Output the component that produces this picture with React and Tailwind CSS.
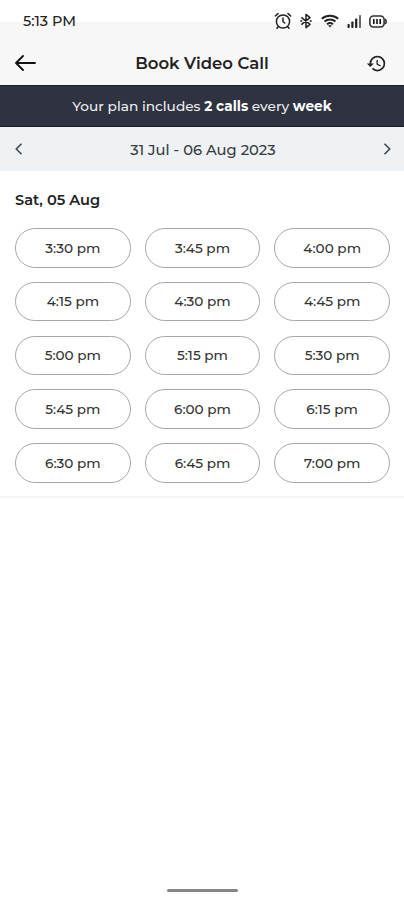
import { useState } from "react";
import { MdHistory } from "react-icons/md";

const slots = [
  "3:30 pm", "3:45 pm", "4:00 pm",
  "4:15 pm", "4:30 pm", "4:45 pm",
  "5:00 pm", "5:15 pm", "5:30 pm",
  "5:45 pm", "6:00 pm", "6:15 pm",
  "6:30 pm", "6:45 pm", "7:00 pm",
];

const AlarmIcon = () => (
  <svg width="18" height="18" viewBox="0 0 18 18" fill="none" stroke="#222" strokeWidth="1.5" strokeLinecap="round">
    <circle cx="9" cy="9.5" r="6.6" />
    <path d="M9 6v3.7l1.8 1.3M1.3 4 4 1.6M16.7 4 14 1.6M4.3 14.7l-1.3 1.6M13.7 14.7l1.3 1.6" />
  </svg>
);

const BluetoothIcon = () => (
  <svg width="12" height="16" viewBox="0 0 12 16" fill="none" stroke="#222" strokeWidth="1.5" strokeLinejoin="round">
    <path d="M1.3 4.3 10 11.3 6 14.6V1.4l4 3.3-8.7 7" />
    <path d="M.3 8h2M9.7 8h2" />
  </svg>
);

const WifiIcon = () => (
  <svg width="18" height="14" viewBox="0 0 18 14" fill="none" stroke="#222" strokeWidth="1.9">
    <path d="M.8 4.7c4.7-4 11.7-4 16.4 0M3.5 7.5c3.1-2.7 7.9-2.7 11 0M6 10.2c1.7-1.4 4.3-1.4 6 0" />
    <path d="M7 11.3h4L9 13.6z" fill="#222" stroke="none" />
  </svg>
);

const SignalIcon = () => (
  <svg width="15" height="13" viewBox="0 0 15 13" fill="#222">
    <rect x="0.5" y="9" width="2.2" height="4" rx="0.7" />
    <rect x="4.3" y="6.5" width="2.2" height="6.5" rx="0.7" />
    <rect x="8.1" y="3.5" width="2.2" height="9.5" rx="0.7" />
    <rect x="12" y="0" width="2" height="13" rx="0.7" fill="#666" />
  </svg>
);

const BatteryIcon = () => (
  <svg width="18" height="13" viewBox="0 0 18 13" fill="none" stroke="#333" strokeWidth="1.6">
    <rect x="0.9" y="1" width="14.2" height="11" rx="3.5" />
    <path d="M16.2 4c1.2 1.3 1.2 3.7 0 5" />
    <path d="M4.8 4v5M8 4v5M11.2 4v5" stroke="#111" />
  </svg>
);

const Chevron = ({ flip }) => (
  <svg className={flip ? "rotate-180" : ""} width="8" height="12" viewBox="0 0 8 12" fill="none" stroke="#40464b" strokeWidth="1.6">
    <path d="M6.5.8 1.3 6l5.2 5.2" />
  </svg>
);

const StatusBar = () => (
  <div className="flex h-[42px] items-center bg-linear-to-b from-white from-[22px] to-[#f7f7f7] to-[22px] pr-[17px] pl-[23px]">
    <span className="pt-[2px] text-[14.4px] font-medium text-[#222]">5:13 PM</span>
    <div className="ml-auto flex items-center">
      <AlarmIcon />
      <span className="ml-[8px]"><BluetoothIcon /></span>
      <span className="ml-[9px]"><WifiIcon /></span>
      <span className="ml-[8px]"><SignalIcon /></span>
      <span className="ml-[7px]"><BatteryIcon /></span>
    </div>
  </div>
);

const App = () => {
  const [selected, setSelected] = useState(null);

  return (
    <div className="flex h-[900px] w-[404px] flex-col bg-white font-['Montserrat','Inter',sans-serif] text-[#222] [&_svg]:block">
      <StatusBar />

      <header className="flex h-[43px] items-center justify-between bg-[#f7f7f7] pr-[17px] pb-px pl-[15px]">
        <button type="button" aria-label="Back">
          <svg width="21" height="16" viewBox="0 0 21 16" fill="none" stroke="#111" strokeWidth="1.8" strokeLinecap="round" strokeLinejoin="round">
            <path d="M20 8H1.2M8 1 1 8l7 7" />
          </svg>
        </button>
        <h1 className="pl-[2px] text-[16.5px] font-semibold">Book Video Call</h1>
        <button type="button" aria-label="History">
          <MdHistory size={21} color="#222" />
        </button>
      </header>

      <div className="flex h-[42px] items-center justify-center border-y border-[#191b26] bg-[#2f3240] pt-px text-[13.7px] font-medium text-[#eeeef1]">
        <p>Your plan includes <b className="font-bold text-white">2 calls</b> every <b className="font-bold text-white">week</b></p>
      </div>

      <div className="flex h-11 items-center justify-between bg-[#eef2f5] pr-[13px] pl-[15px]">
        <button type="button" aria-label="Previous week"><Chevron /></button>
        <span className="pt-[2px] text-[14.7px] font-medium text-[#383b3e]">31 Jul - 06 Aug 2023</span>
        <button type="button" aria-label="Next week"><Chevron flip /></button>
      </div>

      <section className="h-[327px] border-b-2 border-[#f7f7f7] pt-[19px] pr-[14px] pl-[15px]">
        <h2 className="text-[14.6px] leading-5 font-semibold">Sat, 05 Aug</h2>
        <div className="mt-[18px] grid grid-cols-3 gap-x-[14px] gap-y-[14.3px]">
          {slots.map((slot) => (
            <button
              key={slot}
              type="button"
              onClick={() => setSelected(slot)}
              className={`h-[39.5px] rounded-full border text-[13.6px] font-medium text-[#333] ${selected === slot ? "border-[#2f3240]" : "border-[#a5a8a8]"}`}
            >
              {slot}
            </button>
          ))}
        </div>
      </section>

      <div className="mt-auto mb-[8px] h-[3px] w-[71px] self-center rounded-full bg-[#858786]" />
    </div>
  );
};

export default App;
